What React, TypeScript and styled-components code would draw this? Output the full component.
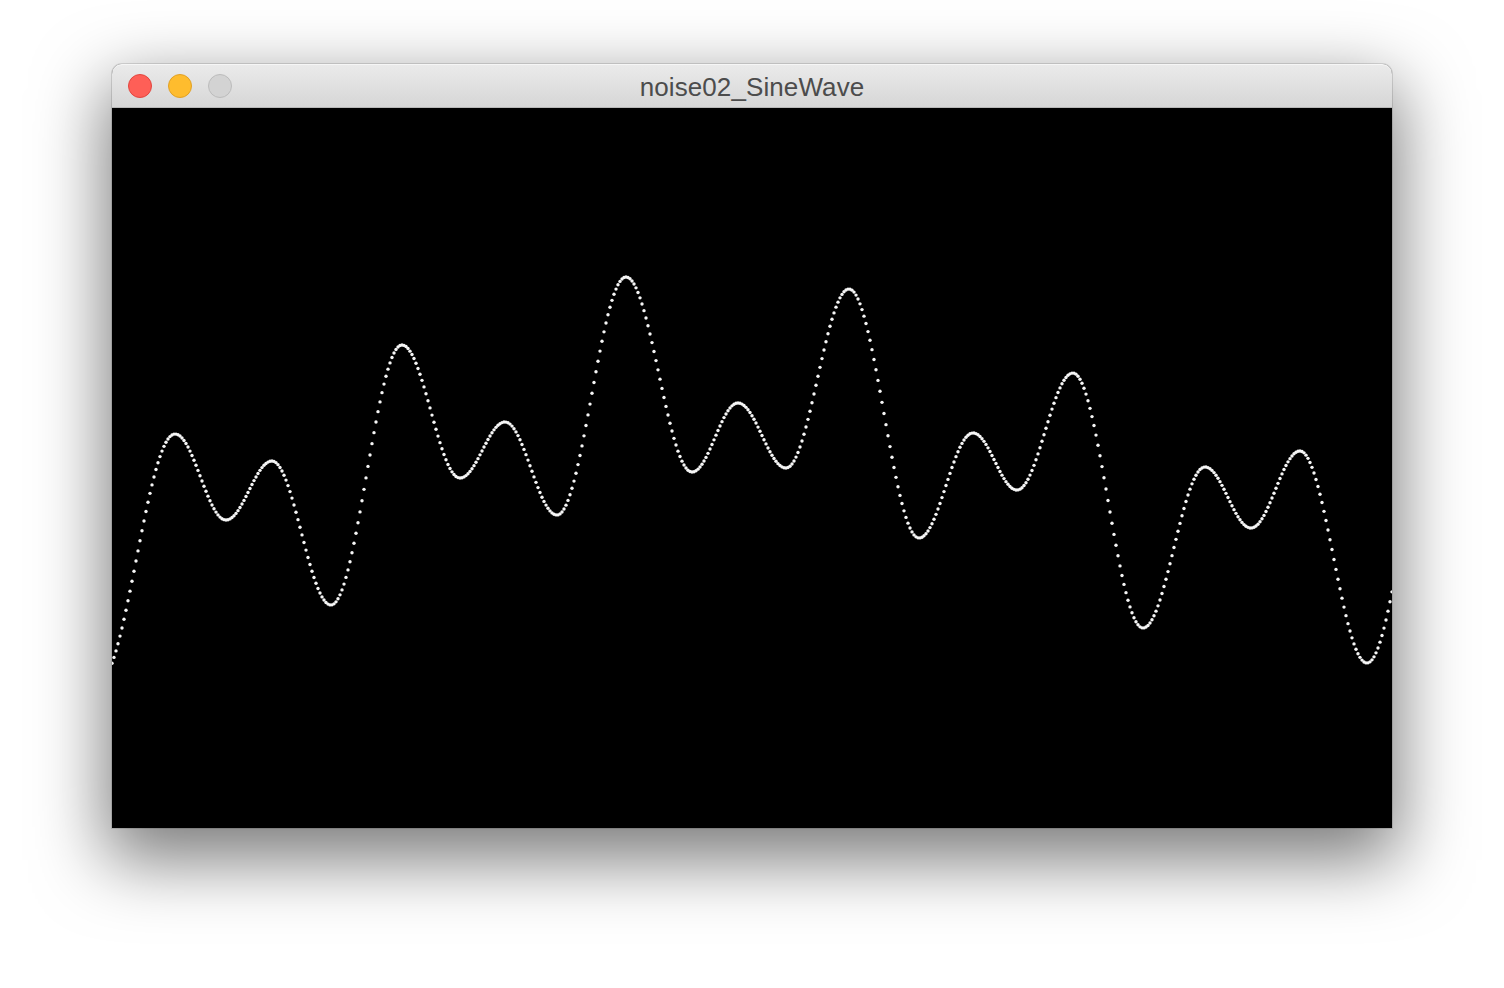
import React from 'react'
import styled, { createGlobalStyle } from 'styled-components'

const GlobalStyle = createGlobalStyle`
  html, body {
    margin: 0;
    padding: 0;
    background: #ffffff;
  }
`

const Page = styled.div`
  display: flex;
  justify-content: center;
  align-items: flex-start;
  padding-top: 64px;
  height: 988px;
  box-sizing: border-box;
  overflow: hidden;
`

const Window = styled.div`
  width: 1280px;
  display: flex;
  flex-direction: column;
  border-radius: 10px 10px 0 0;
  box-shadow: 0 0 0 1px rgba(0, 0, 0, 0.12), 0 26px 70px 6px rgba(0, 0, 0, 0.52);
  background: #000;
`

const TitleBar = styled.div`
  position: relative;
  height: 44px;
  display: flex;
  align-items: center;
  justify-content: center;
  padding-top: 3px;
  border-radius: 10px 10px 0 0;
  background: linear-gradient(to bottom, #ebebeb 0%, #d6d6d6 100%);
  border-bottom: 1px solid #b8b8b8;
  box-shadow: inset 0 1px 0 #f6f6f6;
  box-sizing: border-box;
`

const Lights = styled.div`
  position: absolute;
  left: 16px;
  top: 10px;
  display: flex;
  gap: 16px;
`

const Light = styled.span<{ $fill: string; $edge: string }>`
  width: 24px;
  height: 24px;
  border-radius: 50%;
  box-sizing: border-box;
  background: ${(p) => p.$fill};
  border: 1px solid ${(p) => p.$edge};
`

const Title = styled.div`
  font-family: 'Liberation Sans', Arial, sans-serif;
  font-size: 26px;
  color: #4c4c4c;
  letter-spacing: 0.1px;
`

const Canvas = styled.svg`
  display: block;
  flex: none;
  width: 1280px;
  height: 720px;
  background: #000;
`

// extrema of the wave, canvas coordinates
const extrema: [number, number][] = [
  [-14, 575],
  [63, 326],
  [114, 412],
  [160, 353],
  [219, 497],
  [290, 237],
  [348, 370],
  [393, 314],
  [445, 407],
  [514, 169],
  [580, 364],
  [626, 295],
  [674, 360],
  [737, 181],
  [807, 430],
  [861, 325],
  [905, 382],
  [961, 265],
  [1031, 520],
  [1093, 359],
  [1139, 420],
  [1188, 343],
  [1255, 555],
  [1324, 310],
]

function waveY(x: number): number {
  for (let i = 0; i < extrema.length - 1; i++) {
    const [x0, y0] = extrema[i]
    const [x1, y1] = extrema[i + 1]
    if (x >= x0 && x <= x1) {
      const t = (x - x0) / (x1 - x0)
      return y0 + ((y1 - y0) * (1 - Math.cos(Math.PI * t))) / 2
    }
  }
  return 360
}

const points: [number, number][] = []
for (let x = 0; x <= 1280; x += 2) points.push([x, waveY(x)])

export default function App() {
  return (
    <>
      <GlobalStyle />
      <Page>
        <Window>
          <TitleBar>
            <Lights>
              <Light $fill="#fe5f57" $edge="#e2463f" />
              <Light $fill="#febc2e" $edge="#e1a125" />
              <Light $fill="#d3d3d3" $edge="#bcbcbc" />
            </Lights>
            <Title>noise02_SineWave</Title>
          </TitleBar>
          <Canvas viewBox="0 0 1280 720">
            {points.map(([x, y]) => (
              <circle key={x} cx={x} cy={y} r={1.7} fill="#f6f6f6" />
            ))}
          </Canvas>
        </Window>
      </Page>
    </>
  )
}
